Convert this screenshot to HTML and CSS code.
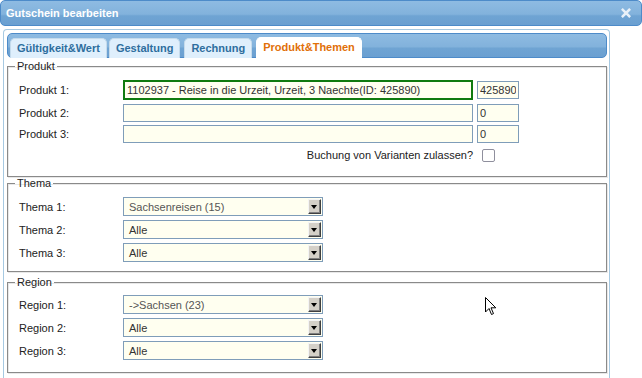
FILE: index.html
```html
<!DOCTYPE html>
<html lang="de">
<head>
<meta charset="utf-8">
<title>Gutschein bearbeiten</title>
<link rel="stylesheet" href="styles.css">
</head>
<body>
<div class="dialog">
  <div class="titlebar">
    <span class="title">Gutschein bearbeiten</span>
    <span class="close" aria-label="schließen">
      <svg width="10" height="10" viewBox="0 0 10 10"><path d="M1.8 1.8 L8.2 8.2 M8.2 1.8 L1.8 8.2" stroke="#e8f0f8" stroke-width="2.6" stroke-linecap="square"/></svg>
    </span>
  </div>
  <div class="tabs">
    <ul class="tabnav">
      <li class="tab">Gültigkeit&amp;Wert</li>
      <li class="tab">Gestaltung</li>
      <li class="tab">Rechnung</li>
      <li class="tab active">Produkt&amp;Themen</li>
    </ul>
    <div class="panel">
      <fieldset class="group group-produkt">
        <legend>Produkt</legend>
        <div class="row first">
          <label>Produkt 1:</label>
          <input class="txt wide focus" type="text" value="1102937 - Reise in die Urzeit, Urzeit, 3 Naechte(ID: 425890)">
          <input class="txt small" type="text" value="425890">
        </div>
        <div class="row">
          <label>Produkt 2:</label>
          <input class="txt wide" type="text" value="">
          <input class="txt small" type="text" value="0">
        </div>
        <div class="row">
          <label>Produkt 3:</label>
          <input class="txt wide" type="text" value="">
          <input class="txt small" type="text" value="0">
        </div>
        <div class="row check-row">
          <span class="check-label">Buchung von Varianten zulassen?</span>
          <span class="checkbox"></span>
        </div>
      </fieldset>
      <fieldset class="group group-thema">
        <legend>Thema</legend>
        <div class="row">
          <label>Thema 1:</label>
          <div class="select"><span class="val light">Sachsenreisen (15)</span><span class="arrow"></span></div>
        </div>
        <div class="row">
          <label>Thema 2:</label>
          <div class="select"><span class="val">Alle</span><span class="arrow"></span></div>
        </div>
        <div class="row">
          <label>Thema 3:</label>
          <div class="select"><span class="val">Alle</span><span class="arrow"></span></div>
        </div>
      </fieldset>
      <fieldset class="group group-region">
        <legend>Region</legend>
        <div class="row">
          <label>Region 1:</label>
          <div class="select"><span class="val light">-&gt;Sachsen (23)</span><span class="arrow"></span></div>
        </div>
        <div class="row">
          <label>Region 2:</label>
          <div class="select"><span class="val">Alle</span><span class="arrow"></span></div>
        </div>
        <div class="row">
          <label>Region 3:</label>
          <div class="select"><span class="val">Alle</span><span class="arrow"></span></div>
        </div>
      </fieldset>
    </div>
  </div>
</div>
<svg class="cursor" width="12" height="19" viewBox="0 0 12 19"><path d="M0.5 0.5 L0.5 15 L4 11.5 L6.5 17.5 L8.5 16.6 L6 10.8 L10.8 10.8 Z" fill="#fff" stroke="#000" stroke-width="1"/></svg>
</body>
</html>
```

FILE: styles.css
```css
html, body {
  margin: 0;
  padding: 0;
  background: #ffffff;
  font-family: "Liberation Sans", Arial, sans-serif;
  font-size: 11px;
  color: #222;
  overflow: hidden;
}
.dialog {
  width: 642px;
  height: 378px;
}
.titlebar {
  box-sizing: border-box;
  height: 26px;
  border: 1px solid #4d8bc9;
  border-radius: 5px;
  background: linear-gradient(to bottom, #8ebbe2 0%, #82b2dc 55%, #6fa4d3 62%, #6a9fd1 100%);
  display: flex;
  align-items: center;
  justify-content: space-between;
  padding: 0 10px 0 5px;
}
.title {
  color: #ffffff;
  font-weight: bold;
  font-size: 11px;
}
.close {
  display: flex;
  width: 10px;
  height: 10px;
}
.tabs {
  box-sizing: border-box;
  margin: 3px 0 0 3px;
  width: 607px;
  height: 360px;
  border: 1px solid #a6c9e2;
  border-bottom: none;
  border-radius: 4px 4px 0 0;
  padding: 3px 0 0 3px;
}
.tabnav {
  box-sizing: border-box;
  list-style: none;
  margin: 0;
  width: 600px;
  height: 25px;
  border: 1px solid #4d8bc9;
  border-radius: 5px;
  background: linear-gradient(to bottom, #8ebbe2 0%, #82b2dc 55%, #6fa4d3 62%, #6a9fd1 100%);
  display: flex;
  align-items: flex-end;
  gap: 2px;
  padding: 0 0 0 2px;
}
.tab {
  box-sizing: border-box;
  height: 20px;
  margin-bottom: -1px;
  padding: 0 6px 0 6px;
  border: 1px solid #c5dbec;
  border-bottom: none;
  border-radius: 5px 5px 0 0;
  background: #dfeffc;
  color: #2e6e9e;
  font-weight: bold;
  line-height: 19px;
}
.tab:nth-child(3), .tab:nth-child(4) { margin-left: 2px; }
.tab.active {
  background: #ffffff;
  border-color: #ffffff;
  color: #e17009;
  height: 21px;
}
.panel {
  padding-top: 2px;
}
.group {
  box-sizing: border-box;
  width: 600px;
  margin: 0;
  padding: 0 0 0 11px;
  border: 1px solid #8a8a8a;
  box-shadow: 1px 1px 0 #e8e8e8, inset 1px 1px 0 #e8e8e8;
}
.group legend {
  padding: 0 2px;
  margin-left: -4px;
  color: #222;
  font-size: 11px;
  line-height: 12px;
}
.group-produkt { height: 117px; padding-top: 7px; }
.group-thema { height: 95px; margin-top: 0; padding-top: 7px; }
.group-region { height: 97px; margin-top: 4px; padding-top: 6px; }
.row {
  display: flex;
  align-items: center;
  height: 21px;
  margin-bottom: 2px;
}
.group-produkt .row { margin-bottom: 0; }
.group-produkt .row.first { margin-bottom: 2px; }
.row label {
  width: 104px;
  flex: none;
  color: #222;
}
.txt {
  box-sizing: border-box;
  height: 18px;
  margin: 0;
  padding: 0 3px;
  border: 1px solid #7f9db9;
  background: #fffff0;
  font-family: "Liberation Sans", Arial, sans-serif;
  font-size: 11px;
  color: #333;
  outline: none;
}
.txt.wide { width: 350px; }
.txt.small { width: 42px; margin-left: 4px; padding: 0 2px; }
.txt.focus {
  height: 20px;
  border: 2px solid #0f7a0f;
  padding: 0 2px;
}
.check-row {
  justify-content: flex-end;
  padding-right: 111px;
  height: 20px;
  margin-top: 1px;
}
.check-label { color: #222; }
.checkbox {
  box-sizing: border-box;
  width: 13px;
  height: 13px;
  margin-left: 9px;
  border: 1px solid #8f8f9d;
  border-radius: 2px;
  background: #fff;
}
.select {
  box-sizing: border-box;
  width: 200px;
  height: 19px;
  border: 1px solid #7f9db9;
  background: #fffff0;
  display: flex;
  align-items: center;
  justify-content: space-between;
  padding: 0 1px 0 5px;
}
.val { color: #333; }
.val.light { color: #555; }
.arrow {
  box-sizing: border-box;
  width: 13px;
  height: 15px;
  background: #d4d0c8;
  border-top: 1px solid #f4f4f4;
  border-left: 1px solid #f4f4f4;
  border-right: 1px solid #404040;
  border-bottom: 1px solid #404040;
  box-shadow: inset -1px -1px 0 #808080;
  position: relative;
}
.arrow::after {
  content: "";
  position: absolute;
  left: 2px;
  top: 5px;
  border-left: 3.5px solid transparent;
  border-right: 3.5px solid transparent;
  border-top: 4px solid #000;
}
.cursor {
  position: absolute;
  left: 485px;
  top: 297px;
}
```
